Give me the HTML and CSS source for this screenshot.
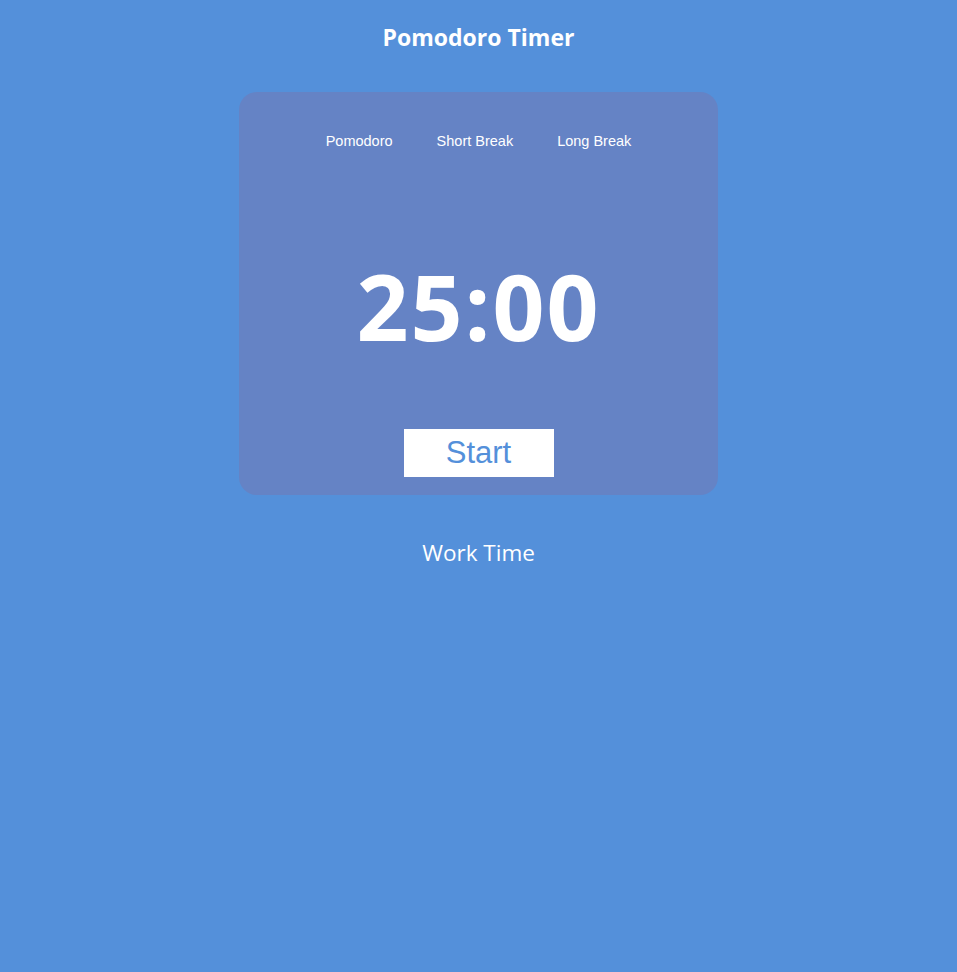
FILE: index.html
```html
<!DOCTYPE html>
<html lang="en">
<head>
<meta charset="utf-8">
<title>Pomodoro Timer</title>
<link rel="stylesheet" href="styles.css">
</head>
<body>
<main class="app">
  <h1 class="title">Pomodoro Timer</h1>
  <section class="card">
    <nav class="tabs">
      <button class="tab">Pomodoro</button>
      <button class="tab">Short Break</button>
      <button class="tab">Long Break</button>
    </nav>
    <div class="time">25:00</div>
    <button class="start">Start</button>
  </section>
  <p class="status">Work Time</p>
</main>
</body>
</html>
```
FILE: styles.css
```css
html, body {
  margin: 0;
  padding: 0;
  background: #5490da;
  min-height: 100%;
}
body {
  font-family: "Open Sans", "Noto Sans", sans-serif;
  color: #fff;
}
.app {
  display: flex;
  flex-direction: column;
  align-items: center;
  padding-top: 22px;
}
.title {
  margin: 0;
  font-size: 23px;
  font-weight: 700;
  line-height: 30px;
}
.card {
  margin-top: 40px;
  width: 479px;
  height: 403px;
  box-sizing: border-box;
  background: #6583c5;
  border-radius: 18px;
  display: flex;
  flex-direction: column;
  align-items: center;
  padding-top: 40px;
}
.tabs {
  display: flex;
  gap: 44px;
}
.tab {
  background: none;
  border: none;
  padding: 0;
  color: #fff;
  font-family: "Liberation Sans", Arial, sans-serif;
  font-size: 14.5px;
  line-height: 18px;
}
.time {
  margin-top: 96px;
  font-size: 91px;
  font-weight: 700;
  line-height: 120px;
  letter-spacing: 2px;
}
.start {
  margin-top: 63px;
  width: 150px;
  height: 48px;
  background: #fff;
  border: none;
  padding: 0;
  color: #5490da;
  font-family: "Liberation Sans", Arial, sans-serif;
  font-size: 31px;
}
.status {
  margin: 43px 0 0;
  font-size: 22.5px;
  line-height: 30px;
}
```
